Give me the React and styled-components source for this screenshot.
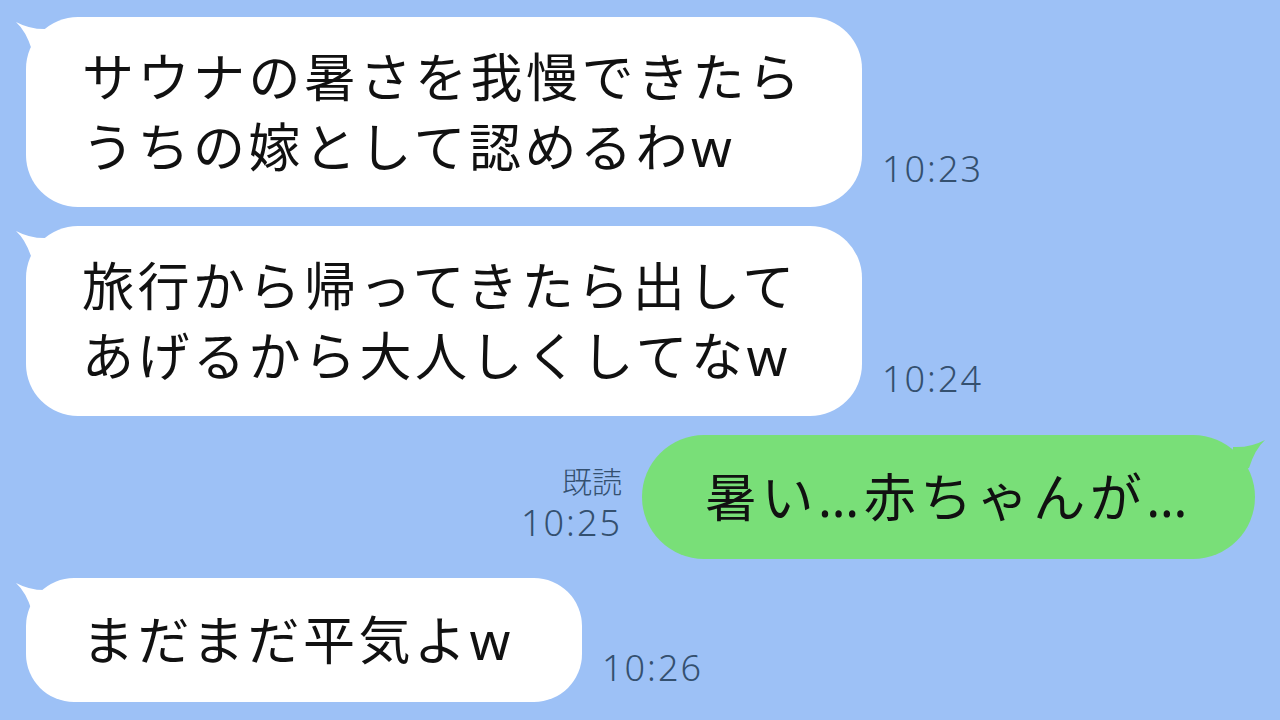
import React from "react";
import styled, { createGlobalStyle } from "styled-components";

const GlobalStyle = createGlobalStyle`
  html, body {
    margin: 0;
    padding: 0;
    background: #9dc1f6;
  }
  body {
    width: 1280px;
    height: 720px;
    overflow: hidden;
  }
`;

const Chat = styled.div`
  display: flex;
  flex-direction: column;
  gap: 19px;
  padding: 17px 25px 0 26px;
  box-sizing: border-box;
  width: 1280px;
  height: 720px;
`;

const Row = styled.div`
  display: flex;
  align-items: flex-end;
  justify-content: ${(p) => (p.$mine ? "flex-end" : "flex-start")};
  gap: 20px;
`;

const Bubble = styled.div`
  position: relative;
  box-sizing: border-box;
  width: ${(p) => p.$width}px;
  background: ${(p) => (p.$mine ? "#79df78" : "#ffffff")};
  border-radius: ${(p) => p.$radius || 52}px;
  padding: ${(p) => (p.$single ? 27 : 25)}px 0 ${(p) => (p.$single ? 27 : 25)}px
    ${(p) => (p.$mine ? 63 : 56)}px;
  font-family: "Noto Sans", "Noto Sans CJK JP", sans-serif;
  font-size: 52px;
  line-height: 70px;
  letter-spacing: ${(p) => (p.$mine ? 4.5 : 3.5)}px;
  color: #111;
  white-space: nowrap;
`;

const Tail = styled.svg`
  position: absolute;
  top: 0;
  width: 40px;
  height: 40px;
  ${(p) => (p.$mine ? "right: -12px; transform: scaleX(-1);" : "left: -12px;")}
`;

const Meta = styled.div`
  display: flex;
  flex-direction: column;
  align-items: ${(p) => (p.$mine ? "flex-end" : "flex-start")};
  gap: 6px;
  padding-bottom: ${(p) => p.$lift}px;
  font-family: "Noto Sans", "Noto Sans CJK JP", sans-serif;
  font-weight: 300;
  color: #34506f;
`;

const Read = styled.span`
  font-size: 30px;
  line-height: 34px;
`;

const Time = styled.span`
  font-size: 36px;
  line-height: 36px;
  letter-spacing: 2px;
`;

function BubbleTail({ mine, color }) {
  return (
    <Tail $mine={mine} viewBox="0 0 40 40">
      <path d="M2 5 Q17 13 34 12 L34 36 L18 33 Q12 14 2 5 Z" fill={color} />
    </Tail>
  );
}

function Message({ mine, lines, time, read, radius, width, lift }) {
  const color = mine ? "#79df78" : "#ffffff";
  const meta = (
    <Meta $mine={mine} $lift={lift}>
      {read && <Read>既読</Read>}
      <Time>{time}</Time>
    </Meta>
  );
  return (
    <Row $mine={mine}>
      {mine && meta}
      <Bubble $mine={mine} $radius={radius} $width={width} $single={lines.length === 1}>
        <BubbleTail mine={mine} color={color} />
        {lines.map((line, i) => (
          <div key={i}>{line}</div>
        ))}
      </Bubble>
      {!mine && meta}
    </Row>
  );
}

const messages = [
  { lines: ["サウナの暑さを我慢できたら", "うちの嫁として認めるわw"], time: "10:23", width: 836, lift: 20 },
  { lines: ["旅行から帰ってきたら出して", "あげるから大人しくしてなw"], time: "10:24", width: 836, lift: 19 },
  { mine: true, read: true, lines: ["暑い…赤ちゃんが…"], time: "10:25", radius: 62, width: 613, lift: 18 },
  { lines: ["まだまだ平気よw"], time: "10:26", radius: 48, width: 556, lift: 16 },
];

export default function App() {
  return (
    <>
      <GlobalStyle />
      <Chat>
        {messages.map((m, i) => (
          <Message key={i} {...m} />
        ))}
      </Chat>
    </>
  );
}
